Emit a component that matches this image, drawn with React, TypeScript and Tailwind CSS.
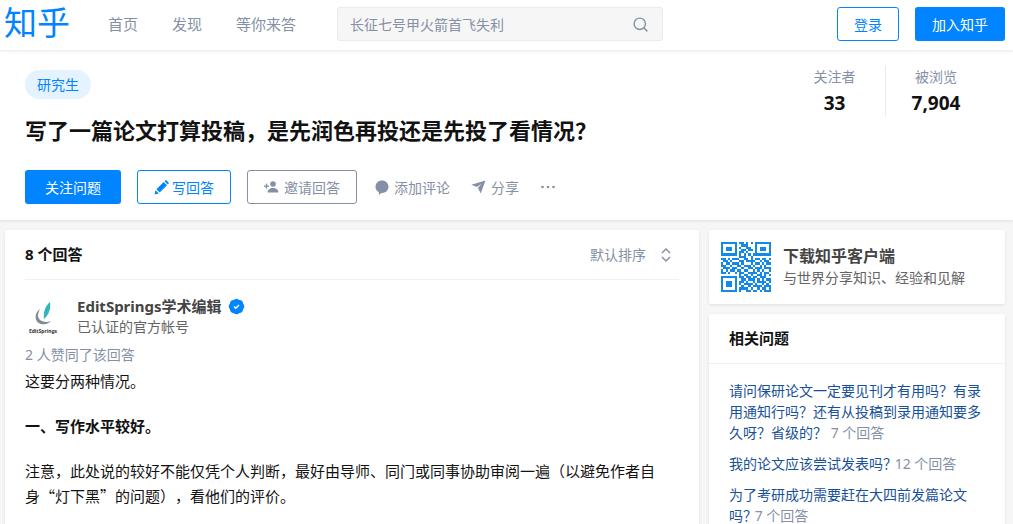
import React from "react";
import { Search } from "lucide-react";

const font = "font-['Noto_Sans','Noto_Sans_CJK_SC',sans-serif]";

const QrCode = () => {
  const rows = [
    "1111111011010101111111",
    "1000001001110001000001",
    "1011101010011001011101",
    "1011101001101101011101",
    "1000001011010001000001",
    "1111111010101011111111",
    "0000000011100100000000",
    "1101011100110101101101",
    "0110100011011110010110",
    "1011011101000101101011",
    "1100100110111010010100",
    "0111011001001101110111",
    "1010110110110010101001",
    "1101001011001111010110",
    "0000000010110100110101",
    "1111111011011011011100",
    "1000001001101110101011",
    "1011101011010010111101",
    "1011101010111101001010",
    "1011101001001011110111",
    "1000001011110100101101",
    "1111111010011011010111",
  ];
  return (
    <svg width="50" height="50" viewBox="0 0 22 22" shapeRendering="crispEdges" className="shrink-0">
      {rows.map((row, y) =>
        row.split("").map((c, x) => (c === "1" ? <rect key={`${x}-${y}`} x={x} y={y} width="1" height="1" fill="#1489e8" /> : null)),
      )}
    </svg>
  );
};

const InviteIcon = () => (
  <svg width="15" height="12" viewBox="0 0 15 12" fill="#8590a6" className="shrink-0">
    <circle cx="9" cy="3" r="2.8" />
    <path d="M3.6 11.5c0-3 2.400-4.600 5.400-4.600s5.400 1.600 5.400 4.600z" />
    <rect x="0" y="4.500" width="5" height="1.300" />
    <rect x="1.850" y="2.650" width="1.300" height="5" />
  </svg>
);

const PenIcon = () => (
  <svg width="15" height="15" viewBox="0 0 15 15" fill="#0084ff" className="shrink-0">
    <path d="M0.500 14.500l1-4.300 3.300 3.300z" />
    <path d="M2.400 9.300l7.300-7.300 3.300 3.300-7.300 7.300z" />
    <path d="M10.500 1.200l0.700-0.700c0.400-0.400 1-0.400 1.400 0l1.900 1.900c0.400 0.400 0.400 1 0 1.400l-0.700 0.700z" />
  </svg>
);

const CommentIcon = () => (
  <svg width="14" height="15" viewBox="0 0 14 15" fill="#8590a6" className="shrink-0">
    <path d="M7 0.500c3.600 0 6.500 2.700 6.500 6.200s-2.900 6.200-6.500 6.200c-0.300 0-0.500 0-0.800 0l-1.700 1.600c-0.300 0.300-0.700 0.100-0.700-0.300l0-2.100c-2-1.100-3.300-3.100-3.300-5.400 0-3.500 2.900-6.200 6.500-6.200z" />
  </svg>
);

const PlaneIcon = () => (
  <svg width="15" height="14" viewBox="0 0 15 14" fill="#8590a6" className="shrink-0">
    <path d="M0.300 4.700l14.200-4.300-4.800 13.200-2.700-5.700 3.400-4.200-4.500 3.300z" />
  </svg>
);

const DotsIcon = () => (
  <svg width="14" height="4" viewBox="0 0 14 4" fill="#8590a6" className="shrink-0">
    <circle cx="1.500" cy="2" r="1.300" />
    <circle cx="7" cy="2" r="1.300" />
    <circle cx="12.500" cy="2" r="1.300" />
  </svg>
);

const SortIcon = () => (
  <svg width="12" height="16" viewBox="0 0 12 16" fill="none" stroke="#8590a6" strokeWidth="1.500" className="shrink-0">
    <path d="M2 6l4-4 4 4" />
    <path d="M2 10l4 4 4-4" />
  </svg>
);

const VerifiedIcon = () => (
  <svg width="17" height="17" viewBox="0 0 24 24" className="shrink-0">
    <path
      d="M3.850 8.620a4 4 0 0 1 4.780-4.770 4 4 0 0 1 6.740 0 4 4 0 0 1 4.780 4.780 4 4 0 0 1 0 6.740 4 4 0 0 1-4.770 4.780 4 4 0 0 1-6.750 0 4 4 0 0 1-4.780-4.770 4 4 0 0 1 0-6.760Z"
      fill="#0084ff"
      stroke="#0084ff"
      strokeWidth="2"
    />
    <path d="m8.500 12 2.500 2.500 4.500-4.500" fill="none" stroke="#fff" strokeWidth="2" />
  </svg>
);

const App = () => {
  return (
    <div className={`${font} h-[524px] w-[1013px] overflow-hidden bg-[#f6f6f6] text-[#121212]`}>
      <header className="relative z-10 flex h-[50px] items-center bg-white pb-[2px] shadow-[0_1px_3px_rgba(18,18,18,0.1)]">
        <div className="mb-[4px] ml-[4px] w-[67px] text-[33px] leading-none text-[#0084ff]">知乎</div>
        <nav className="ml-[37px] flex gap-[34px] text-[15px] text-[#8590a6]">
          <span>首页</span>
          <span>发现</span>
          <span>等你来答</span>
        </nav>
        <div className="ml-[41px] flex h-[34px] w-[326px] items-center justify-between rounded-[3px] border border-[#ebebeb] bg-[#f6f6f6] pl-[12px] pr-[13px]">
          <span className="text-[14px] text-[#8590a6]">长征七号甲火箭首飞失利</span>
          <Search size={17} strokeWidth={2} className="text-[#8590a6]" />
        </div>
        <button className="ml-[174px] h-[34px] w-[62px] rounded-[3px] border border-[#0084ff] text-[14px] text-[#0084ff]">登录</button>
        <button className="ml-[16px] h-[34px] w-[90px] rounded-[3px] bg-[#0084ff] text-[14px] text-white">加入知乎</button>
      </header>

      <section className="h-[170px] bg-white pl-[25px] pr-[25px] pt-[20px] shadow-[0_1px_3px_rgba(18,18,18,0.1)]">
        <div className="flex justify-between">
          <div>
            <span className="flex h-[29px] w-[66px] items-center justify-center rounded-full bg-[#e5f2ff] text-[14px] text-[#0084ff]">研究生</span>
            <h1 className="mt-[15px] text-[22px] font-bold leading-[33px]">写了一篇论文打算投稿，是先润色再投还是先投了看情况？</h1>
          </div>
          <div className="mr-[2px] mt-[-4px] flex h-[50px]">
            <div className="flex w-[100px] flex-col items-center border-r border-[#ebebeb] pr-[2px]">
              <span className="text-[14px] leading-[22px] text-[#8590a6]">关注者</span>
              <span className="mt-[2px] text-[19px] font-bold leading-[26px]">33</span>
            </div>
            <div className="flex w-[100px] flex-col items-center">
              <span className="text-[14px] leading-[22px] text-[#8590a6]">被浏览</span>
              <span className="mt-[2px] text-[19px] font-bold leading-[26px]">7,904</span>
            </div>
          </div>
        </div>
        <div className="mt-[23px] flex items-center text-[14px]">
          <button className="h-[34px] w-[96px] rounded-[3px] bg-[#0084ff] text-white">关注问题</button>
          <button className="ml-[16px] flex h-[34px] w-[94px] items-center justify-center gap-[3px] rounded-[3px] border border-[#0084ff] text-[#0084ff]">
            <PenIcon />
            写回答
          </button>
          <button className="ml-[16px] flex h-[34px] w-[110px] items-center justify-center gap-[5px] rounded-[3px] border border-[#8590a6] text-[#8590a6]">
            <InviteIcon />
            邀请回答
          </button>
          <span className="ml-[18px] flex items-center gap-[5px] text-[#8590a6]">
            <CommentIcon />
            添加评论
          </span>
          <span className="ml-[21px] flex items-center gap-[5px] text-[#8590a6]">
            <PlaneIcon />
            分享
          </span>
          <span className="ml-[22px]">
            <DotsIcon />
          </span>
        </div>
      </section>

      <main className="mt-[10px] flex items-start gap-[10px] pl-[5px]">
        <article className="h-[400px] w-[694px] rounded-[2px] bg-white px-[20px] shadow-[0_1px_3px_rgba(18,18,18,0.1)]">
          <div className="flex h-[50px] items-center justify-between border-b border-[#f0f0f0] pr-[7px]">
            <span className="text-[15px] font-bold">8 个回答</span>
            <span className="flex items-center gap-[14px] text-[14px] text-[#8590a6]">
              默认排序
              <SortIcon />
            </span>
          </div>
          <div className="mt-[15px] flex items-center">
            <div className="flex h-[38px] w-[38px] flex-col items-center justify-end pr-[2px]">
              <svg width="26" height="26" viewBox="0 0 26 26" fill="none">
                <path d="M20 1c1 6-1 13-6 17-1-6 1-13 6-17z" fill="#35b3bd" />
                <path d="M10 8C4 12 4 21 11 23c5 1 8-1 10-3-5 2-12 1-13-5 0-3 1-5 2-7z" fill="#808a90" />
              </svg>
              <span className="whitespace-nowrap text-[5px] font-bold leading-[8px] text-[#333]">EditSprings</span>
            </div>
            <div className="ml-[14px]">
              <div className="flex items-center gap-[6px]">
                <span className="text-[15px] font-bold leading-[22px] text-[#444]">EditSprings学术编辑</span>
                <VerifiedIcon />
              </div>
              <div className="text-[14px] leading-[20px] text-[#646464]">已认证的官方帐号</div>
            </div>
          </div>
          <div className="mt-[8px] text-[14px] leading-[20px] text-[#8590a6]">2 人赞同了该回答</div>
          <div className="mt-[3px] font-['Noto_Sans_CJK_SC',sans-serif] text-[15px] leading-[25px] text-[#121212] [text-spacing-trim:space-all]">
            <p>这要分两种情况。</p>
            <p className="mt-[20px] font-bold">一、写作水平较好。</p>
            <p className="mt-[20px]">注意，此处说的较好不能仅凭个人判断，最好由导师、同门或同事协助审阅一遍（以避免作者自身“灯下黑”的问题），看他们的评价。</p>
          </div>
        </article>

        <aside className="w-[296px]">
          <div className="flex h-[74px] items-center rounded-[2px] bg-white pl-[12px] shadow-[0_1px_3px_rgba(18,18,18,0.1)]">
            <QrCode />
            <div className="ml-[12px]">
              <div className="text-[16px] font-bold leading-[22px] text-[#444]">下载知乎客户端</div>
              <div className="text-[14px] leading-[22px] text-[#646464]">与世界分享知识、经验和见解</div>
            </div>
          </div>
          <div className="mt-[10px] h-[300px] rounded-[2px] bg-white shadow-[0_1px_3px_rgba(18,18,18,0.1)]">
            <div className="flex h-[50px] items-center border-b border-[#f0f0f0] pl-[20px] text-[15px] font-bold">相关问题</div>
            <div className="px-[20px] pt-[16px] text-[14px] leading-[21px] text-[#175199] [text-spacing-trim:space-all]">
              <p>
                请问保研论文一定要见刊才有用吗？有录用通知行吗？还有从投稿到录用通知要多久呀？省级的？ <span className="text-[#8590a6]">7 个回答</span>
              </p>
              <p className="mt-[10px]">
                我的论文应该尝试发表吗？ <span className="-ml-[6px] text-[#8590a6]">12 个回答</span>
              </p>
              <p className="mt-[10px]">
                为了考研成功需要赶在大四前发篇论文吗？ <span className="-ml-[6px] text-[#8590a6]">7 个回答</span>
              </p>
            </div>
          </div>
        </aside>
      </main>
    </div>
  );
};

export default App;
